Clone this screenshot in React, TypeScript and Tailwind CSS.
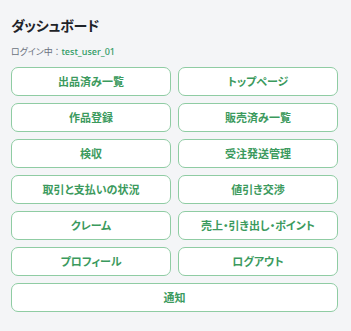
const links = [
  '出品済み一覧',
  'トップページ',
  '作品登録',
  '販売済み一覧',
  '検収',
  '受注発送管理',
  '取引と支払いの状況',
  '値引き交渉',
  'クレーム',
  '売上・引き出し・ポイント',
  'プロフィール',
  'ログアウト',
];

export default function App() {
  return (
    <div
      className="min-h-[331px] w-[351px] bg-[#f4f5f7] px-[11px] pt-[14px] [font-feature-settings:'palt']"
      style={{ fontFamily: '"Noto Sans CJK JP", "Noto Sans", sans-serif' }}
    >
      <h1 className="text-[14px] font-bold leading-[22px] tracking-[-0.3px] text-[#1f2328]">ダッシュボード</h1>
      <p className="mt-[9px] text-[9px] leading-[14px] text-[#6b7280]">
        ログイン中 ：{' '}
        <span className="font-medium text-[#2f9a63]" style={{ fontFamily: '"Noto Sans", sans-serif' }}>
          test_user_01
        </span>
      </p>

      <div className="mt-[8px] grid w-[327px] grid-cols-2 gap-x-[7px] gap-y-[7px]">
        {links.map(label => (
          <button
            key={label}
            className="h-[29px] rounded-[7px] border border-[#8fcca3] bg-white text-[11px] font-bold text-[#3b9a5d]"
          >
            {label}
          </button>
        ))}
        <button className="col-span-2 h-[29px] rounded-[7px] border border-[#8fcca3] bg-white text-[11px] font-bold text-[#3b9a5d]">
          通知
        </button>
      </div>
    </div>
  );
}
